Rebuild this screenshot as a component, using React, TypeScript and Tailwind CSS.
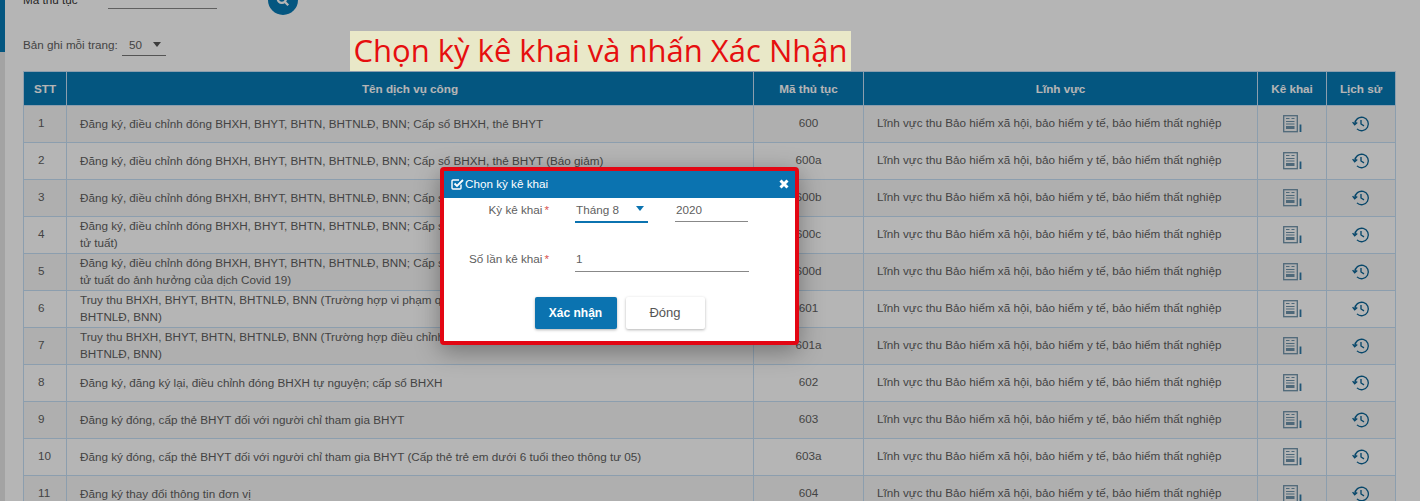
const rows = [
  {
    stt: "1",
    name: "Đăng ký, điều chỉnh đóng BHXH, BHYT, BHTN, BHTNLĐ, BNN; Cấp sổ BHXH, thẻ BHYT",
    code: "600",
  },
  {
    stt: "2",
    name: "Đăng ký, điều chỉnh đóng BHXH, BHYT, BHTN, BHTNLĐ, BNN; Cấp sổ BHXH, thẻ BHYT (Báo giảm)",
    code: "600a",
  },
  {
    stt: "3",
    name: "Đăng ký, điều chỉnh đóng BHXH, BHYT, BHTN, BHTNLĐ, BNN; Cấp sổ BHXH, thẻ BHYT",
    code: "600b",
  },
  {
    stt: "4",
    name: "Đăng ký, điều chỉnh đóng BHXH, BHYT, BHTN, BHTNLĐ, BNN; Cấp sổ BHXH, thẻ BHYT\ntử tuất)",
    code: "600c",
  },
  {
    stt: "5",
    name: "Đăng ký, điều chỉnh đóng BHXH, BHYT, BHTN, BHTNLĐ, BNN; Cấp sổ BHXH, thẻ BHYT\ntử tuất do ảnh hưởng của dịch Covid 19)",
    code: "600d",
  },
  {
    stt: "6",
    name: "Truy thu BHXH, BHYT, BHTN, BHTNLĐ, BNN (Trường hợp vi phạm quy định về đóng\nBHTNLĐ, BNN)",
    code: "601",
  },
  {
    stt: "7",
    name: "Truy thu BHXH, BHYT, BHTN, BHTNLĐ, BNN (Trường hợp điều chỉnh tăng tiền lương đóng\nBHTNLĐ, BNN)",
    code: "601a",
  },
  { stt: "8", name: "Đăng ký, đăng ký lại, điều chỉnh đóng BHXH tự nguyện; cấp sổ BHXH", code: "602" },
  { stt: "9", name: "Đăng ký đóng, cấp thẻ BHYT đối với người chỉ tham gia BHYT", code: "603" },
  {
    stt: "10",
    name: "Đăng ký đóng, cấp thẻ BHYT đối với người chỉ tham gia BHYT (Cấp thẻ trẻ em dưới 6 tuổi theo thông tư 05)",
    code: "603a",
  },
  { stt: "11", name: "Đăng ký thay đổi thông tin đơn vị", code: "604" },
];

function FormIcon() {
  return (
    <svg width="19" height="18" viewBox="0 0 19 18" className="ml-[25px]" fill="none">
      <rect x="0.7" y="0.7" width="13.6" height="16" stroke="#6f93ab" strokeWidth="1.3" />
      <path d="M3 3.5h3.5M8.5 3.5h3M3 6.5h8.5M3 9h8.5" stroke="#6f93ab" strokeWidth="1.2" />
      <rect x="3" y="11" width="8.5" height="3" fill="#6f93ab" />
      <path d="M17.5 9.5V17" stroke="#2f7aa8" strokeWidth="1.8" />
    </svg>
  );
}

function HistoryIcon() {
  return (
    <svg width="18" height="18" viewBox="0 0 24 24" className="mx-auto" fill="none" stroke="#0b6496" strokeWidth="1.8">
      <path d="M3.8 12a9 9 0 1 1 2.8 6.5" />
      <path d="M0.8 9.5 3.6 13l3.4-3" />
      <path d="M12 6.5V12l4 2.5" />
    </svg>
  );
}

export default function App() {
  return (
    <div className="relative h-[501px] w-[1420px] overflow-hidden bg-white font-['Liberation_Sans',sans-serif] text-[11.7px] text-[#5f5f5f]">
      {/* sidebar edge */}
      <div className="absolute left-0 top-0 h-full w-[5px] bg-[#e6e6e6]">
        <div className="h-[52px] bg-[#0779b5]" />
      </div>

      <div className="-mt-[15px] pl-[23px]">
        <div className="flex h-[30px] items-center">
          <span className="w-[85px] text-[#333]">Mã thủ tục</span>
          <div className="mt-[16px] h-px w-[109px] bg-[#888]" />
          <div className="ml-[51px] flex h-[30px] w-[30px] items-center justify-center rounded-full bg-[#0779b5]">
            <svg width="14" height="14" viewBox="0 0 24 24" fill="none" stroke="#fff" strokeWidth="4">
              <circle cx="10" cy="10" r="7" />
              <path d="m15 15 6 6" />
            </svg>
          </div>
        </div>

        <div className="mt-[19px] flex h-[22px] items-center">
          <span className="w-[99px]">Bản ghi mỗi trang:</span>
          <div className="flex h-[22px] w-[44px] items-center justify-between border-b border-[#777] pl-[7px] pr-[5px]">
            <span>50</span>
            <span className="h-0 w-0 border-x-[4.5px] border-t-[5px] border-x-transparent border-t-[#555]" />
          </div>
        </div>

        <table className="mt-[15px] w-[1372px] table-fixed border-collapse">
          <colgroup>
            <col className="w-[43px]" />
            <col className="w-[687px]" />
            <col className="w-[110px]" />
            <col className="w-[394px]" />
            <col className="w-[69px]" />
            <col className="w-[69px]" />
          </colgroup>
          <thead>
            <tr className="h-[34px] bg-[#0779b5] font-bold text-white">
              {["STT", "Tên dịch vụ công", "Mã thủ tục", "Lĩnh vực", "Kê khai", "Lịch sử"].map((h) => (
                <th key={h} className="border border-[#c5dff5] text-center font-bold">
                  {h}
                </th>
              ))}
            </tr>
          </thead>
          <tbody>
            {rows.map((r, i) => (
              <tr key={r.stt} className={`h-[37px] ${i % 2 === 0 ? "bg-[#f7f7f7]" : "bg-white"}`}>
                <td className="border border-[#c5dff5] pb-[2px] pl-[14px]">{r.stt}</td>
                <td className="whitespace-pre-line border border-[#c5dff5] px-[13px] pb-[2px] leading-[17px]">{r.name}</td>
                <td className="border border-[#c5dff5] pb-[2px] text-center">{r.code}</td>
                <td className="border border-[#c5dff5] px-[13px] pb-[2px]">
                  Lĩnh vực thu Bảo hiểm xã hội, bảo hiểm y tế, bảo hiểm thất nghiệp
                </td>
                <td className="border border-[#c5dff5]">
                  <FormIcon />
                </td>
                <td className="border border-[#c5dff5]">
                  <HistoryIcon />
                </td>
              </tr>
            ))}
          </tbody>
        </table>
      </div>

      {/* dim layer behind the dialog */}
      <div className="absolute inset-0 bg-black/[.29]" />

      {/* pasted annotation */}
      <div className="absolute left-[350px] top-[31px] flex h-[40px] w-[501px] items-center justify-center bg-[#e9e8c8] pb-[2px] font-['Open_Sans',sans-serif] text-[31px] text-[#e60f0f]">
        Chọn kỳ kê khai và nhấn Xác Nhận
      </div>

      {/* dialog */}
      <div className="absolute left-[440px] top-[167px] w-[359px] rounded-[4px] border-[4px] border-[#e30613] bg-white shadow-[0_6px_24px_rgba(0,0,0,0.35)]">
        <div className="flex h-[27px] items-center justify-between bg-[#0b73b0] pb-[1px] pl-[7px] pr-[6px] text-white">
          <div className="flex items-center gap-[1px]">
            <svg width="13" height="12" viewBox="0 0 13 12" fill="none" stroke="#fff" strokeWidth="1.4">
              <path d="M10 6.5V10a1 1 0 0 1-1 1H2a1 1 0 0 1-1-1V3a1 1 0 0 1 1-1h6" />
              <path d="m3.5 5.5 2.5 2.5 6-6" strokeWidth="1.8" />
            </svg>
            <span>Chọn kỳ kê khai</span>
          </div>
          <svg width="10" height="10" viewBox="0 0 10 10" stroke="#fff" strokeWidth="3">
            <path d="m1.5 1.5 7 7M8.5 1.5l-7 7" />
          </svg>
        </div>

        <div className="flex h-[25px] items-start">
          <div className="w-[105px] pt-[3px] text-right">
            Kỳ kê khai<span className="ml-[2px] text-[#d9534f]">*</span>
          </div>
          <div className="ml-[26px] flex h-[25px] w-[73px] items-start justify-between border-b-2 border-[#0b73b0] pl-[1px] pr-[4px] pt-[3px]">
            <span>Tháng 8</span>
            <span className="mt-[5px] h-0 w-0 border-x-[4.5px] border-t-[5px] border-x-transparent border-t-[#0b73b0]" />
          </div>
          <div className="ml-[27px] h-[24px] w-[73px] border-b border-[#888] pl-[1px] pt-[3px]">2020</div>
        </div>

        <div className="mt-[24px] flex h-[25px] items-start">
          <div className="w-[105px] pt-[3px] text-right">
            Số lần kê khai<span className="ml-[2px] text-[#d9534f]">*</span>
          </div>
          <div className="ml-[26px] h-[25px] w-[174px] border-b border-[#888] pl-[1px] pt-[3px]">1</div>
        </div>

        <div className="mt-[25px] flex h-[44px] justify-center gap-[9px]">
          <button className="h-[32px] w-[82px] rounded-[2px] bg-[#0b73b0] text-[12px] font-bold text-white shadow-[0_1px_3px_rgba(0,0,0,0.3)]">
            Xác nhận
          </button>
          <button className="h-[32px] w-[79px] rounded-[2px] bg-white text-[13px] text-[#555] shadow-[0_1px_3px_rgba(0,0,0,0.3)]">
            Đóng
          </button>
        </div>
      </div>
    </div>
  );
}
